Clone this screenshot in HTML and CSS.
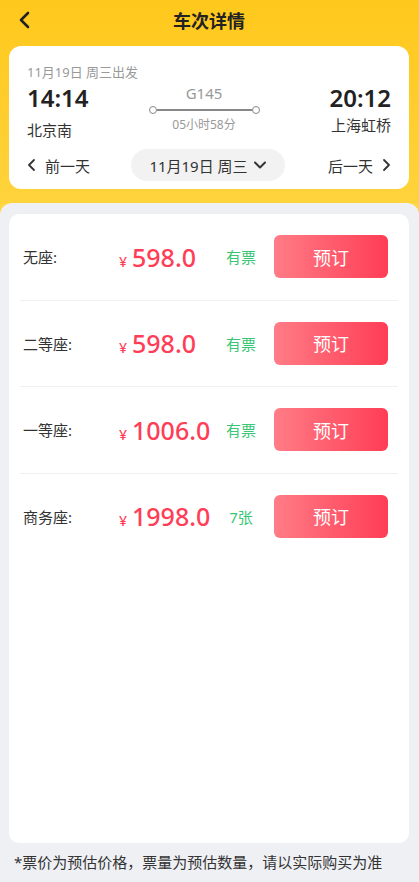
FILE: index.html
```html
<!DOCTYPE html>
<html lang="zh-CN">

<head>
    <meta charset="UTF-8">
    <meta name="viewport" content="width=device-width, initial-scale=1.0">
    <title>车次详情</title>
    <link rel="stylesheet" href="styles.css">
</head>

<body>
    <div class="top">
        <div class="nav">
            <svg class="back" width="14" height="18" viewBox="0 0 14 18">
                <path d="M11 2 L4 9 L11 16" fill="none" stroke="#222" stroke-width="2.6" stroke-linecap="round" stroke-linejoin="round" />
            </svg>
            <h1>车次详情</h1>
        </div>
        <div class="trip">
            <div class="trip-date">11月19日 周三出发</div>
            <div class="trip-main">
                <div class="station">
                    <div class="time">14:14</div>
                    <div class="name">北京南</div>
                </div>
                <div class="middle">
                    <div class="train-no">G145</div>
                    <div class="line"><span class="dot"></span><span class="bar"></span><span class="dot"></span></div>
                    <div class="duration">05小时58分</div>
                </div>
                <div class="station end">
                    <div class="time">20:12</div>
                    <div class="name">上海虹桥</div>
                </div>
            </div>
            <div class="days">
                <div class="day-link">
                    <svg width="10" height="14" viewBox="0 0 10 14"><path d="M7 2 L2 7 L7 12" fill="none" stroke="#333" stroke-width="1.8" stroke-linecap="round" stroke-linejoin="round" /></svg>
                    前一天
                </div>
                <div class="day-pill">
                    11月19日 周三
                    <svg width="14" height="10" viewBox="0 0 14 10"><path d="M2 2.5 L7 7.5 L12 2.5" fill="none" stroke="#333" stroke-width="2" stroke-linecap="round" stroke-linejoin="round" /></svg>
                </div>
                <div class="day-link">
                    后一天
                    <svg width="10" height="14" viewBox="0 0 10 14"><path d="M3 2 L8 7 L3 12" fill="none" stroke="#333" stroke-width="1.8" stroke-linecap="round" stroke-linejoin="round" /></svg>
                </div>
            </div>
        </div>
    </div>

    <div class="panel">
        <div class="seats">
            <div class="seat">
                <div class="seat-name">无座:</div>
                <div class="price"><span class="yen">¥</span>598.0</div>
                <div class="stock">有票</div>
                <button class="book">预订</button>
            </div>
            <div class="seat">
                <div class="seat-name">二等座:</div>
                <div class="price"><span class="yen">¥</span>598.0</div>
                <div class="stock">有票</div>
                <button class="book">预订</button>
            </div>
            <div class="seat">
                <div class="seat-name">一等座:</div>
                <div class="price"><span class="yen">¥</span>1006.0</div>
                <div class="stock">有票</div>
                <button class="book">预订</button>
            </div>
            <div class="seat">
                <div class="seat-name">商务座:</div>
                <div class="price"><span class="yen">¥</span>1998.0</div>
                <div class="stock">7张</div>
                <button class="book">预订</button>
            </div>
        </div>
        <p class="note">*票价为预估价格，票量为预估数量，请以实际购买为准</p>
    </div>
</body>

</html>
```

FILE: styles.css
```css
body {
    margin: 0;
    font-family: "Noto Sans", "Noto Sans CJK SC", sans-serif;
    color: #333;
    background: #ffd540;
    height: 882px;
    display: flex;
    flex-direction: column;
}

.top {
    background: linear-gradient(180deg, #ffc81c 0%, #ffd33c 100%);
    padding: 0 10px 14px 9px;
}

.nav {
    height: 42px;
    display: flex;
    align-items: center;
    justify-content: center;
    position: relative;
}

.back {
    position: absolute;
    left: 8px;
    top: 11px;
}

h1 {
    margin: 0;
    font-size: 18px;
    font-weight: 600;
    color: #222;
    line-height: 42px;
}

.trip {
    margin-top: 4px;
    background: #fff;
    border-radius: 12px;
    padding: 18px 18px 8px 18px;
}

.trip-date {
    font-size: 13px;
    color: #999;
    line-height: 16px;
}

.trip-main {
    display: flex;
    justify-content: space-between;
    align-items: flex-start;
}

.station .time {
    font-size: 24px;
    font-weight: 600;
    color: #222;
    line-height: 36px;
}

.station .name {
    font-size: 15px;
    color: #333;
    line-height: 28px;
}

.station.end {
    text-align: right;
}

.station.end .name {
    line-height: 18px;
}

.middle {
    display: flex;
    flex-direction: column;
    align-items: center;
    margin-right: 10px;
}

.train-no {
    font-size: 15px;
    color: #999;
    line-height: 26px;
}

.line {
    display: flex;
    align-items: center;
    width: 111px;
    height: 8px;
}

.dot {
    width: 6px;
    height: 6px;
    border: 1.5px solid #888;
    border-radius: 50%;
}

.bar {
    flex: 1;
    height: 2px;
    background: #888;
}

.duration {
    font-size: 12px;
    color: #999;
    line-height: 22px;
}

.days {
    margin-top: 5px;
    display: flex;
    align-items: center;
    justify-content: space-between;
}

.day-link {
    font-size: 15px;
    color: #333;
    display: flex;
    align-items: center;
    gap: 8px;
}

.day-pill {
    background: #f2f2f2;
    border-radius: 16px;
    height: 32px;
    width: 154px;
    margin-right: 2px;
    font-size: 15px;
    color: #333;
    display: flex;
    align-items: center;
    justify-content: center;
    gap: 5px;
}

.panel {
    flex: 1;
    background: #eff0f4;
    border-radius: 12px 12px 0 0;
    padding: 11px 10px 0 9px;
    display: flex;
    flex-direction: column;
}

.seats {
    flex: 1;
    background: #fff;
    border-radius: 10px;
}

.seat {
    height: 85.5px;
    margin: 0 11px;
    padding: 0 10px 0 3px;
    display: flex;
    align-items: center;
    border-bottom: 1px solid #f0f0f0;
}

.seat:last-child {
    border-bottom: none;
}

.seat-name {
    width: 96px;
    font-size: 15px;
    color: #333;
}

.price {
    width: 102px;
    font-size: 25px;
    font-weight: 500;
    color: #ff3d57;
    display: flex;
    align-items: baseline;
}

.yen {
    font-size: 14px;
    margin-right: 5px;
}

.stock {
    width: 40px;
    font-size: 15px;
    color: #3ac676;
    text-align: center;
}

.book {
    margin-left: auto;
    width: 114px;
    height: 43px;
    border: none;
    border-radius: 6px;
    background: linear-gradient(90deg, #ff7c86 0%, #ff3d55 100%);
    color: #fff;
    font-family: inherit;
    font-size: 18px;
}

.note {
    margin: 0;
    padding: 9px 5px 10px 5px;
    font-size: 15px;
    color: #333;
    line-height: 20px;
}
```
